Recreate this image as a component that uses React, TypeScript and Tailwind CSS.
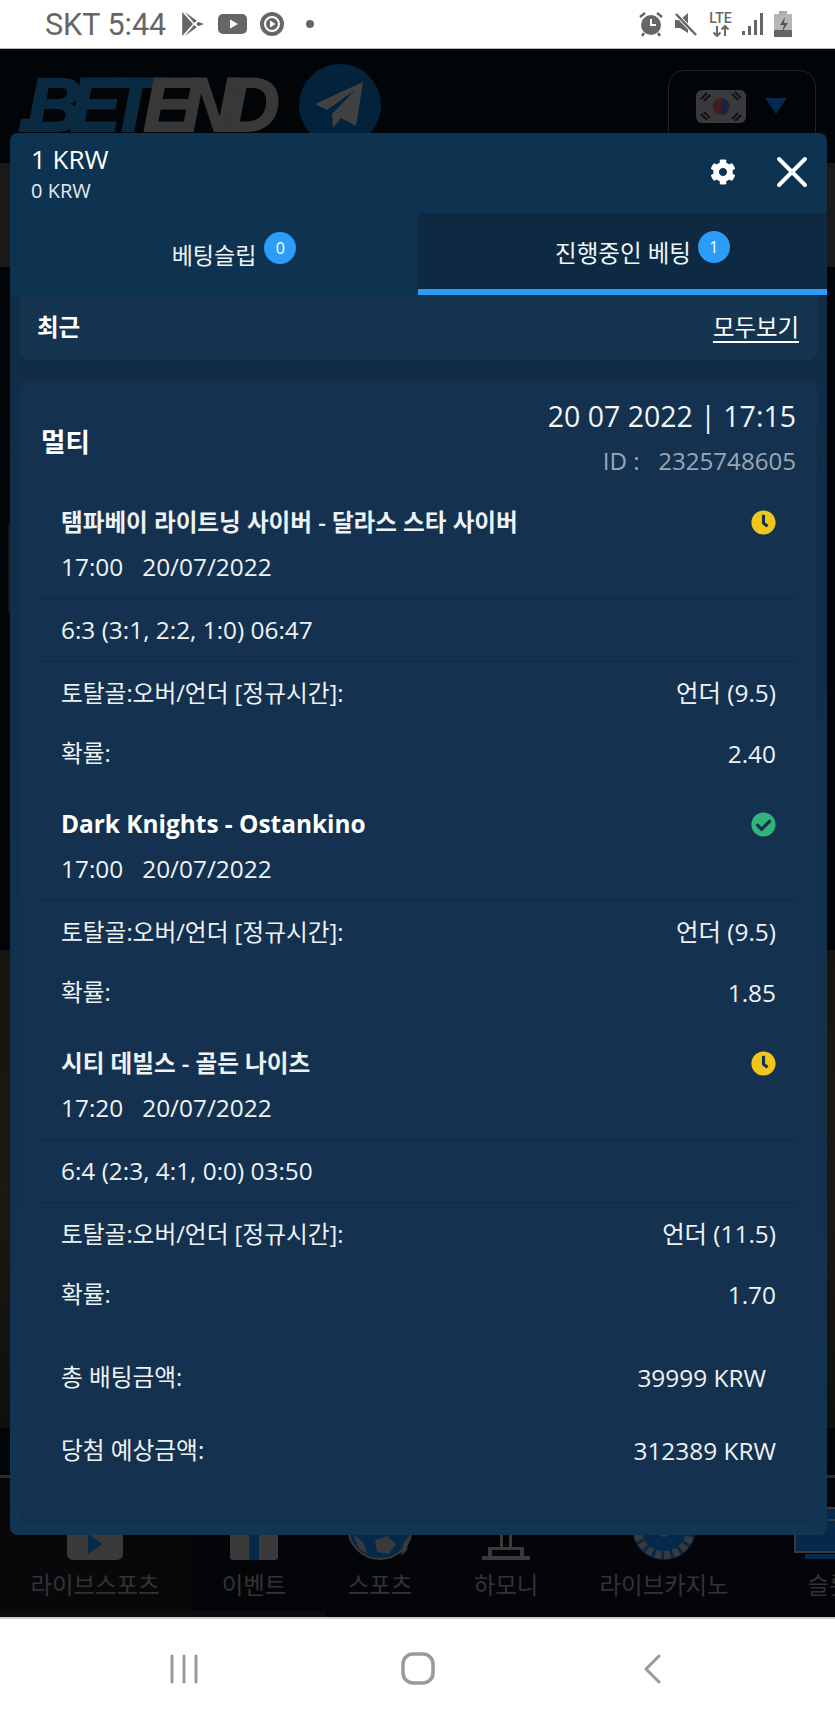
import { X } from "lucide-react";
import { FaCog, FaClock, FaCheckCircle } from "react-icons/fa";

const font = { fontFamily: '"Open Sans","Noto Sans CJK KR",sans-serif' };

function StatusBar() {
  return (
    <div className="flex h-[49px] shrink-0 items-center justify-between border-b border-[#b5b5b5] bg-white pl-[45px] pr-[43px]">
      <div className="flex items-center">
        <span className="mt-[3px] text-[30.5px] leading-none text-[#666] font-['Roboto',sans-serif]">SKT 5:44</span>
        <svg className="ml-[15px]" width="24" height="26" viewBox="0 0 22 24" fill="#666"><path d="M1 1l10 11L1 23zM3.500 1l11 8-2.500 2zM3.500 23l11-8-2.500-2zM16 10l5 2-5 2-2-2z" /></svg>
        <svg className="ml-[13px]" width="30" height="22" viewBox="0 0 30 22"><rect width="29" height="20" y="1" rx="5" fill="#666" /><path d="M12 6.500l8 4.500-8 4.500z" fill="#fff" /></svg>
        <svg className="ml-[12px]" width="24" height="24" viewBox="0 0 24 24"><circle cx="12" cy="12" r="12" fill="#666" /><circle cx="12" cy="12" r="7" fill="none" stroke="#fff" strokeWidth="2" /><path d="M10 8.500l5.500 3.500-5.500 3.500z" fill="#fff" /></svg>
        <span className="ml-[22px] h-[8px] w-[8px] rounded-full bg-[#666]" />
      </div>
      <div className="flex items-center">
        <svg width="24" height="26" viewBox="0 0 24 26"><circle cx="12" cy="14" r="10" fill="#666" /><path d="M12 8v6h5" stroke="#fff" strokeWidth="2" fill="none" /><path d="M1 6l5-4M23 6l-5-4M5 22l-2 3M19 22l2 3" stroke="#666" strokeWidth="2.500" /></svg>
        <svg className="ml-[11px]" width="24" height="24" viewBox="0 0 24 24"><path d="M1 8h5l8-7v20l-8-5H1z" fill="#666" /><path d="M2 2l20 21" stroke="#fff" strokeWidth="4" /><path d="M2 2l20 21" stroke="#666" strokeWidth="2.500" /></svg>
        <div className="ml-[10px] flex w-[25px] flex-col items-center">
          <span className="text-[14px] leading-[13px] font-medium text-[#666] font-['Roboto',sans-serif]">LTE</span>
          <svg width="20" height="12" viewBox="0 0 20 12" stroke="#666" strokeWidth="2" fill="none"><path d="M6 1v10M2.500 7.500L6 11l3.500-3.500M14 11V1M10.500 4.500L14 1l3.500 3.500" /></svg>
        </div>
        <svg className="ml-[9px]" width="22" height="24" viewBox="0 0 22 24" fill="#666"><rect x="0" y="19" width="3" height="4" /><rect x="6" y="14" width="3" height="9" /><rect x="12" y="8" width="3" height="15" /><rect x="18" y="1" width="3" height="22" /></svg>
        <svg className="ml-[10px]" width="18" height="26" viewBox="0 0 18 26"><rect x="5" y="0" width="8" height="3" fill="#aaa" /><rect x="0" y="3" width="18" height="23" fill="#b5b5b5" /><rect x="0" y="19" width="18" height="7" fill="#666" /><path d="M11 6l-5 8h4l-2 7 6-9h-4z" fill="#555" /></svg>
      </div>
    </div>
  );
}

function NavItem({ w, label, children }: { w: string; label: string; children: React.ReactNode }) {
  return (
    <div className={`${w} flex shrink-0 flex-col items-center`}>
      <div className="flex h-[82px] items-end">{children}</div>
      <span className="mt-[9px] whitespace-nowrap text-[23.4px] leading-[32px] text-[#333335]">{label}</span>
    </div>
  );
}

function Background() {
  return (
    <div className="flex h-[1716px] flex-col bg-[#020508]">
      <StatusBar />
      <div className="flex h-[114px] shrink-0 items-start justify-between overflow-hidden pl-[18px] pr-[19px]">
        <div className="mt-[14px] flex items-start">
          <span className="font-['Liberation_Sans',sans-serif] text-[76px] font-bold italic leading-[84px] tracking-[-12px] [-webkit-text-stroke:2px_currentColor]">
            <span className="text-[#0a2a42]">.BET</span>
            <span className="text-[#383838]">END</span>
          </span>
          <div className="ml-[31px] mt-[1px] flex h-[82px] w-[82px] items-center justify-center rounded-full bg-[#02233b]">
            <svg width="50" height="46" viewBox="0 0 50 46" fill="#414141"><path d="M48 0L0 22l12 6L40 8 17 32l1 14 8-10 15 8z" /></svg>
          </div>
        </div>
        <div className="mt-[21px] flex h-[90px] w-[148px] items-start rounded-[16px] border border-[#1c242c] pl-[27px] pt-[19px]">
          <svg width="50" height="33" viewBox="0 0 50 33">
            <rect width="50" height="33" rx="6" fill="#3a3a3c" />
            <path d="M25 8a8.500 8.500 0 0 1 0 17z" fill="#1c2340" />
            <path d="M25 8a8.500 8.500 0 0 0 0 17z" fill="#451c20" />
            <path d="M5 9l6-6M8 11l6-6M36 4l6 6M39 2l6 6M5 24l6 6M8 22l6 6M36 29l6-6M39 31l6-6" stroke="#111" strokeWidth="2" />
          </svg>
          <svg className="ml-[19px] mt-[8px]" width="22" height="16" viewBox="0 0 22 16" fill="#06294d"><path d="M0 0h22L11 16z" /></svg>
        </div>
      </div>
      <div className="h-[104px] shrink-0 bg-[#1b1a18]" />
      <div className="h-[250px] shrink-0" />
      <div className="mx-[8px] h-[103px] shrink-0 rounded-[10px] bg-[#14181c]" />
      <div className="h-[330px] shrink-0" />
      <div className="h-[478px] shrink-0 bg-gradient-to-b from-[#17140f] via-[#1c1814] to-[#100f0c]" />
      <div className="h-[47px] shrink-0" />
      <div className="h-[3px] shrink-0 bg-[#2c2c2e]" />
      <div className="relative flex h-[139px] shrink-0 overflow-hidden bg-[#040508]">
        <NavItem w="w-[191px] border-r border-[#0b0b0e] bg-[#08080b]" label="라이브스포츠">
          <svg width="56" height="40" viewBox="0 0 56 40"><rect width="56" height="40" rx="6" fill="#3a3a3a" /><path d="M21 14l14 10-14 10z" fill="#05294a" /></svg>
        </NavItem>
        <NavItem w="w-[126px]" label="이벤트">
          <svg width="48" height="40" viewBox="0 0 48 40"><rect width="48" height="40" rx="3" fill="#3a3a3a" /><rect x="19" width="10" height="40" fill="#05294a" /></svg>
        </NavItem>
        <NavItem w="w-[126px]" label="스포츠">
          <svg width="66" height="40" viewBox="0 0 66 40"><circle cx="33" cy="7" r="32" fill="#05294a" stroke="#3a3a3a" strokeWidth="2" /><path d="M28 20l12-4 9 8-7 10-12-2zM6 14l10 8 4 12-8-6zM56 24l6-8-2 14-6 6z" fill="#3a3a3a" /></svg>
        </NavItem>
        <NavItem w="w-[126px]" label="하모니">
          <svg width="48" height="40" viewBox="0 0 48 40" fill="#3a3a3a"><rect x="0" y="36" width="48" height="4" /><rect x="8" y="27" width="32" height="3" /><rect x="6" y="27" width="4" height="10" /><rect x="38" y="27" width="4" height="10" /><rect x="18" y="0" width="3" height="28" /><rect x="27" y="0" width="3" height="28" /></svg>
        </NavItem>
        <NavItem w="w-[190px]" label="라이브카지노">
          <svg width="64" height="40" viewBox="0 0 64 40"><circle cx="32" cy="8" r="32" fill="#05294a" /><circle cx="32" cy="8" r="27" fill="none" stroke="#3a3a3a" strokeWidth="8" strokeDasharray="6 3" /><circle cx="32" cy="14" r="3" fill="#3a3a3a" /></svg>
        </NavItem>
        <NavItem w="w-[140px]" label="슬롯">
          <svg width="72" height="54" viewBox="0 0 72 54"><rect x="2" y="2" width="68" height="44" fill="#05294a" stroke="#3a3a3a" strokeWidth="2" /><path d="M2 14h68" stroke="#3a3a3a" strokeWidth="2" /><rect x="12" y="48" width="50" height="5" fill="#05294a" /></svg>
        </NavItem>
        <div className="absolute bottom-0 left-0 h-[6px] w-[325px] bg-[#0d0d10]" />
      </div>
      <div className="flex flex-1 items-center border-t-2 border-[#cfcfcf] bg-white pt-[2px]">
        <div className="flex w-full items-center pl-[170px]">
          <svg width="28" height="30" viewBox="0 0 28 30" stroke="#9a9a9a" strokeWidth="3" strokeLinecap="round"><path d="M2 2v26M14 2v26M26 2v26" /></svg>
          <svg className="ml-[203px]" width="34" height="33" viewBox="0 0 34 33"><rect x="2" y="2" width="30" height="29" rx="10" fill="none" stroke="#9a9a9a" strokeWidth="3.500" /></svg>
          <svg className="ml-[208px]" width="18" height="30" viewBox="0 0 18 30" fill="none" stroke="#9a9a9a" strokeWidth="3" strokeLinecap="round" strokeLinejoin="round"><path d="M16 2L3 15l13 13" /></svg>
        </div>
      </div>
    </div>
  );
}

function Row({ left, right, latin, className = "" }: { left: string; right?: string; latin?: boolean; className?: string }) {
  return (
    <div className={`flex items-center justify-between px-[21px] text-[#eef2f5] ${className}`}>
      <span className={latin ? "text-[24.4px]" : "text-[23.7px]"}>{left}</span>
      {right && <span className="text-[24.4px]">{right}</span>}
    </div>
  );
}

function Match({
  title,
  time,
  score,
  right,
  odds,
  status,
  bold,
}: {
  title: string;
  time: string;
  score?: string;
  right: string;
  odds: string;
  status: "clock" | "check";
  bold?: boolean;
}) {
  return (
    <div className="mb-[18px]">
      <div className="flex h-[45px] items-center justify-between px-[21px] pt-[2px]">
        <span className={`${bold ? "text-[24.4px] font-bold text-white" : "text-[23.6px] font-semibold text-[#eef2f5]"}`}>{title}</span>
        {status === "clock" ? <FaClock className="text-[#f1c61b]" size={25} /> : <FaCheckCircle className="text-[#2fb57a]" size={25} />}
      </div>
      <Row left={time} latin className="h-[46px] whitespace-pre" />
      <div className="mt-[8px] border-t border-[#112a42]" />
      {score && (
        <>
          <Row left={score} latin className="h-[62px]" />
          <div className="border-t border-[#112a42]" />
        </>
      )}
      <Row left="토탈골:오버/언더 [정규시간]:" right={right} className="h-[60px] pt-[3px]" />
      <Row left="확률:" right={odds} className="h-[61px] pt-[3px]" />
    </div>
  );
}

function Modal() {
  return (
    <div className="absolute left-[10px] top-[133px] flex h-[1402px] w-[817px] flex-col overflow-hidden rounded-[8px] bg-[#0f3654]" style={font}>
      <div className="flex h-[80px] shrink-0 items-center justify-between bg-[#0e3350] pl-[21px] pr-[9px]">
        <div className="flex flex-col pt-[2px] text-white">
          <span className="text-[26px] leading-[34px]">1 KRW</span>
          <span className="text-[20px] leading-[30px] text-[#e4eaee]">0 KRW</span>
        </div>
        <div className="mb-[2px] flex items-center">
          <FaCog className="text-white" size={26} />
          <X className="ml-[30px] text-white" size={52} strokeWidth={1.800} />
        </div>
      </div>
      <div className="flex h-[82px] shrink-0">
        <div className="flex w-[408px] items-center justify-center bg-[#0e3350] pb-[2px] pl-[40px]">
          <span className="mt-[4px] text-[23px] text-[#f2f5f7]">베팅슬립</span>
          <span className="mb-[10px] ml-[8px] flex h-[32px] w-[32px] items-center justify-center rounded-full bg-[#2c9cf6] text-[16px] text-white">0</span>
        </div>
        <div className="flex w-[409px] items-center justify-center border-b-[6px] border-[#2c9cf6] bg-[#0d2a42] pl-[40px] pt-[6px]">
          <span className="text-[23.5px] text-[#f2f5f7]">진행중인 베팅</span>
          <span className="mb-[14px] ml-[7px] flex h-[32px] w-[32px] items-center justify-center rounded-full bg-[#2c9cf6] text-[16px] text-white">1</span>
        </div>
      </div>
      <div className="flex flex-1 flex-col bg-gradient-to-b from-[#112c45] to-[#113552] px-[10px]">
        <div className="flex h-[65px] shrink-0 items-center justify-between rounded-b-[8px] bg-[#14344f] pl-[17px] pr-[18px] text-white">
          <span className="text-[23.5px] font-semibold">최근</span>
          <span className="text-[23.4px] underline underline-offset-[5px]">모두보기</span>
        </div>
        <div className="flex-1 pt-[21px]">
          <div className="h-[1143px] rounded-[8px] bg-[#14324f] px-[20px]">
            <div className="flex h-[118px] items-start justify-between px-[1px]">
              <span className="mt-[43px] text-[26.5px] font-semibold leading-[36px] text-white">멀티</span>
              <div className="mt-[15px] flex flex-col items-end">
                <span className="text-[28.5px] leading-[40px] text-[#f2f5f7]">20 07 2022 | 17:15</span>
                <span className="mt-[9px] whitespace-pre text-[24.1px] leading-[32px] text-[#98a7b4]">ID :   2325748605</span>
              </div>
            </div>
            <Match title="탬파베이 라이트닝 사이버 - 달라스 스타 사이버" time="17:00   20/07/2022" score="6:3 (3:1, 2:2, 1:0) 06:47" right="언더 (9.5)" odds="2.40" status="clock" />
            <Match title="Dark Knights - Ostankino" time="17:00   20/07/2022" right="언더 (9.5)" odds="1.85" status="check" bold />
            <Match title="시티 데빌스 - 골든 나이츠" time="17:20   20/07/2022" score="6:4 (2:3, 4:1, 0:0) 03:50" right="언더 (11.5)" odds="1.70" status="clock" />
            <div className="mt-[34px] flex h-[40px] items-center justify-between pl-[21px] pr-[31px] text-[#eef2f5]">
              <span className="text-[23.7px]">총 배팅금액:</span>
              <span className="text-[24.4px]">39999 KRW</span>
            </div>
            <Row left="당첨 예상금액:" right="312389 KRW" className="mt-[33px] h-[40px]" />
          </div>
        </div>
      </div>
    </div>
  );
}

export default function App() {
  return (
    <div className="relative h-[1716px] w-[835px] overflow-hidden" style={font}>
      <Background />
      <Modal />
    </div>
  );
}
